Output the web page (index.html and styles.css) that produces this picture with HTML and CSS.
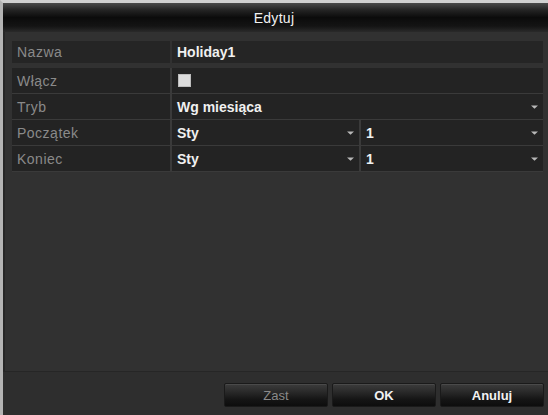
FILE: index.html
```html
<!DOCTYPE html>
<html lang="pl">
<head>
<meta charset="utf-8">
<title>Edytuj</title>
<link rel="stylesheet" href="styles.css">
</head>
<body>
<div class="dialog">
  <div class="titlebar">Edytuj</div>
  <div class="content">
    <div class="row row-name">
      <div class="label">Nazwa</div>
      <div class="value">Holiday1</div>
    </div>
    <div class="group">
      <div class="row">
        <div class="label">Włącz</div>
        <div class="value"><span class="checkbox"></span></div>
      </div>
      <div class="row">
        <div class="label">Tryb</div>
        <div class="value select">Wg miesiąca<svg class="arrow" width="7" height="4" viewBox="0 0 7 4"><path d="M0 0.5 H7 L3.5 3.8 Z" fill="#b8b8b8"/></svg></div>
      </div>
      <div class="row">
        <div class="label">Początek</div>
        <div class="value select half">Sty<svg class="arrow" width="7" height="4" viewBox="0 0 7 4"><path d="M0 0.5 H7 L3.5 3.8 Z" fill="#b8b8b8"/></svg></div>
        <div class="value select">1<svg class="arrow" width="7" height="4" viewBox="0 0 7 4"><path d="M0 0.5 H7 L3.5 3.8 Z" fill="#b8b8b8"/></svg></div>
      </div>
      <div class="row">
        <div class="label">Koniec</div>
        <div class="value select half">Sty<svg class="arrow" width="7" height="4" viewBox="0 0 7 4"><path d="M0 0.5 H7 L3.5 3.8 Z" fill="#b8b8b8"/></svg></div>
        <div class="value select">1<svg class="arrow" width="7" height="4" viewBox="0 0 7 4"><path d="M0 0.5 H7 L3.5 3.8 Z" fill="#b8b8b8"/></svg></div>
      </div>
    </div>
  </div>
  <div class="footer">
    <button class="btn disabled">Zast</button>
    <button class="btn">OK</button>
    <button class="btn">Anuluj</button>
  </div>
</div>
</body>
</html>
```

FILE: styles.css
```css
html, body {
  margin: 0;
  padding: 0;
  background: #2f2f2f;
}

body {
  font-family: "Liberation Sans", Arial, sans-serif;
  width: 548px;
  height: 415px;
  overflow: hidden;
}

.dialog {
  width: 548px;
  height: 415px;
  box-sizing: border-box;
  border-top: 3px solid #d0d0d0;
  border-left: 3px solid #b4b4b4;
  background: #323232;
  display: flex;
  flex-direction: column;
  box-shadow: inset 2px 0 0 #222;
}

.titlebar {
  height: 29px;
  flex: none;
  display: flex;
  align-items: center;
  justify-content: center;
  color: #f2f2f2;
  font-size: 14px;
  letter-spacing: 0.3px;
  padding-right: 3px;
  background: linear-gradient(#4a4a4a 0%, #262626 22%, #0b0b0b 50%, #141414 80%, #2a2a2a 100%);
}

.content {
  flex: 1;
  padding: 9px 5px 0 9px;
  display: flex;
  flex-direction: column;
  background: #313131;
  box-shadow: inset 2px 0 0 #262626;
}

.row {
  display: flex;
  gap: 2px;
  height: 25px;
}

.row-name {
  height: 22px;
  margin-bottom: 5px;
}

.group {
  display: flex;
  flex-direction: column;
  gap: 1px;
  background: #3a3a3a;
  padding-bottom: 1px;
}

.label {
  width: 158px;
  flex: none;
  background: #232323;
  color: #8a8a8a;
  font-size: 14px;
  letter-spacing: 0.5px;
  display: flex;
  align-items: center;
  padding-left: 5px;
  box-sizing: border-box;
}

.value {
  flex: 1;
  background: #232323;
  color: #f0f0f0;
  font-size: 14px;
  font-weight: bold;
  display: flex;
  align-items: center;
  padding-left: 5px;
  padding-right: 5px;
  box-sizing: border-box;
}

.row-name .label,
.row-name .value {
  background: #252525;
}

.half {
  flex: none;
  width: 187px;
}

.select {
  justify-content: space-between;
}

.arrow {
  flex: none;
}

.checkbox {
  display: block;
  width: 13px;
  height: 13px;
  background: #dcdcdc;
  box-shadow: inset 0 0 0 1px #bdbdbd;
  margin-left: 1px;
}

.footer {
  height: 44px;
  flex: none;
  box-sizing: border-box;
  border-top: 1px solid #262626;
  background: #2e2e2e;
  display: flex;
  justify-content: flex-end;
  align-items: flex-start;
  gap: 4px;
  padding: 11px 4px 0 0;
}

.btn {
  width: 104px;
  height: 24px;
  border: 1px solid #1a1a1a;
  border-radius: 2px;
  background: linear-gradient(#3c3c3c 0%, #2a2a2a 35%, #151515 70%, #0d0d0d 100%);
  box-shadow: inset 0 1px 0 #4a4a4a;
  color: #f2f2f2;
  font-family: "Liberation Sans", Arial, sans-serif;
  font-size: 13px;
  font-weight: bold;
  padding: 0;
}

.btn.disabled {
  color: #8a8a8a;
  font-weight: normal;
}
```
